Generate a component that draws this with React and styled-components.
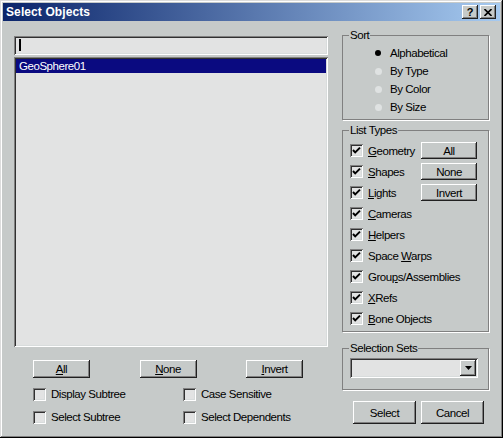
import styled, { createGlobalStyle } from 'styled-components';

const Face = '#c6cac9';
const Field = '#e2e3e3';

const GlobalStyle = createGlobalStyle`
 html, body {
  margin: 0;
  padding: 0;
  background: ${Face};
 }
 body {
  font-family: 'Liberation Sans', Arial, sans-serif;
  font-size: 11.5px;
  letter-spacing: -0.45px;
  color: #000;
 }
`;

/* classic 3d edges */
const raised = `
 box-shadow: inset -1px -1px #202020, inset 1px 1px #fff, inset -2px -2px #808080, inset 2px 2px ${Face};
`;
const sunken = `
 box-shadow: inset 1px 1px #808080, inset -1px -1px #fff, inset 2px 2px #303030, inset -2px -2px #d8dcdc;
`;

const Window = styled.div`
 width: 503px;
 height: 438px;
 box-sizing: border-box;
 padding: 3px;
 background: ${Face};
 box-shadow: inset -1px -1px #000, inset 1px 1px #dcdcdc, inset -2px -2px #808080, inset 2px 2px #fff;
 display: flex;
 flex-direction: column;
`;

const TitleBar = styled.div`
 height: 18px;
 display: flex;
 align-items: center;
 padding: 0 4px 0 3px;
 background: linear-gradient(to right, #0a246a, #a6caf0);
`;

const Title = styled.span`
 flex: 1;
 color: #fff;
 font-weight: 700;
 font-size: 12px;
 letter-spacing: 0.1px;
`;

const TitleButton = styled.button`
 width: 16px;
 height: 14px;
 margin-left: ${({ $gap }) => $gap || 0}px;
 padding: 0;
 border: 0;
 background: ${Face};
 ${raised}
 display: flex;
 align-items: center;
 justify-content: center;
 font-family: 'Liberation Sans', Arial, sans-serif;
 font-weight: 700;
 font-size: 11px;
 line-height: 1;
 color: #000;
`;

const Body = styled.div`
 display: grid;
 grid-template-columns: 314px 147px;
 column-gap: 14px;
 padding: 8px 0 0 11px;
`;

const LeftColumn = styled.div`
 display: flex;
 flex-direction: column;
 padding-top: 7px;
`;

const SearchField = styled.div`
 height: 19px;
 box-sizing: border-box;
 padding: 3px 4px;
 background: ${Field};
 ${sunken}
`;

const Caret = styled.span`
 display: block;
 width: 2px;
 height: 12px;
 margin-left: 1px;
 background: #000;
`;

const ObjectList = styled.div`
 height: 290px;
 margin-top: 2px;
 box-sizing: border-box;
 padding: 2px;
 background: ${Field};
 ${sunken}
`;

const ListItem = styled.div`
 height: 14px;
 line-height: 14px;
 padding-left: 3px;
 background: ${({ $selected }) => ($selected ? '#0a0a80' : 'transparent')};
 color: ${({ $selected }) => ($selected ? '#fff' : '#000')};
`;

const ButtonRow = styled.div`
 display: flex;
 justify-content: space-between;
 margin-top: 13px;
 padding: 0 25px 0 19px;
`;

const Button = styled.button`
 width: ${({ $w }) => $w || 57}px;
 height: ${({ $h }) => $h || 18}px;
 padding: 0;
 border: 0;
 background: ${Face};
 ${raised}
 font: inherit;
 letter-spacing: inherit;
 color: #000;
`;

const Options = styled.div`
 display: grid;
 grid-template-columns: 150px auto;
 row-gap: 9px;
 margin-top: 9px;
 padding-left: 19px;
`;

const CheckRow = styled.label`
 display: flex;
 align-items: center;
 gap: 5px;
 height: ${({ $h }) => $h || 14}px;
`;

const Box = styled.span`
 width: 13px;
 height: 13px;
 flex: none;
 background: ${Field};
 ${sunken}
 display: flex;
 align-items: center;
 justify-content: center;
`;

const Key = styled.span`
 text-decoration: underline;
`;

const RightColumn = styled.div`
 display: flex;
 flex-direction: column;
`;

const Group = styled.fieldset`
 margin: ${({ $top }) => $top || 0}px 0 0;
 padding: 0;
 min-width: 0;
 border: 1px solid #808080;
 box-shadow: 1px 1px 0 #fff;
`;

const Legend = styled.legend`
 margin-left: 6px;
 padding: 0 1px;
 line-height: 12px;
`;

const GroupBody = styled.div`
 padding: ${({ $pad }) => $pad};
`;

const RadioRow = styled.div`
 display: flex;
 align-items: center;
 gap: 8px;
 height: 18px;
`;

const Dot = styled.span`
 width: 8px;
 height: 8px;
 flex: none;
 display: flex;
 align-items: center;
 justify-content: center;
 &::after {
  content: '';
  width: ${({ $on }) => ($on ? 6 : 7)}px;
  height: ${({ $on }) => ($on ? 6 : 7)}px;
  border-radius: 50%;
  background: ${({ $on }) => ($on ? '#000' : '#dfe2e2')};
 }
`;

const TypeRow = styled.div`
 display: flex;
 align-items: center;
 height: 21px;
`;

const TypeLabel = styled(CheckRow)`
 flex: 1;
`;

const Dropdown = styled.div`
 height: 20px;
 box-sizing: border-box;
 padding: 2px;
 display: flex;
 justify-content: flex-end;
 background: ${Field};
 ${sunken}
`;

const DropButton = styled.span`
 width: 16px;
 height: 16px;
 background: ${Face};
 ${raised}
 display: flex;
 align-items: center;
 justify-content: center;
`;

const DialogButtons = styled.div`
 display: flex;
 gap: 5px;
 margin-top: 11px;
 padding-left: 11px;
`;

const Check = ({ on }) => (
 <Box>
  {on && (
   <svg width='9' height='9' viewBox='0 0 9 9'>
    <path d='M1 4 L3.2 6.4 L8 1.6' fill='none' stroke='#000' strokeWidth='2' />
   </svg>
  )}
 </Box>
);

const listTypes = [
 { pre: '', key: 'G', post: 'eometry', button: 'All' },
 { pre: '', key: 'S', post: 'hapes', button: 'None' },
 { pre: '', key: 'L', post: 'ights', button: 'Invert' },
 { pre: '', key: 'C', post: 'ameras' },
 { pre: '', key: 'H', post: 'elpers' },
 { pre: 'Space ', key: 'W', post: 'arps' },
 { pre: 'Grou', key: 'p', post: 's/Assemblies' },
 { pre: '', key: 'X', post: 'Refs' },
 { pre: '', key: 'B', post: 'one Objects' },
];

const sorts = ['Alphabetical', 'By Type', 'By Color', 'By Size'];

const App = () => {
 return (
  <>
   <GlobalStyle />
   <Window>
    <TitleBar>
     <Title>Select Objects</Title>
     <TitleButton>?</TitleButton>
     <TitleButton $gap={2}>
      <svg width='8' height='7' viewBox='0 0 8 7'>
       <path d='M0.5 0 L7.5 7 M7.5 0 L0.5 7' stroke='#000' strokeWidth='1.6' />
      </svg>
     </TitleButton>
    </TitleBar>
    <Body>
     <LeftColumn>
      <SearchField>
       <Caret />
      </SearchField>
      <ObjectList>
       <ListItem $selected>GeoSphere01</ListItem>
      </ObjectList>
      <ButtonRow>
       <Button>
        <Key>A</Key>ll
       </Button>
       <Button>
        <Key>N</Key>one
       </Button>
       <Button>
        <Key>I</Key>nvert
       </Button>
      </ButtonRow>
      <Options>
       <CheckRow>
        <Check />
        Display Subtree
       </CheckRow>
       <CheckRow>
        <Check />
        Case Sensitive
       </CheckRow>
       <CheckRow>
        <Check />
        Select Subtree
       </CheckRow>
       <CheckRow>
        <Check />
        Select Dependents
       </CheckRow>
      </Options>
     </LeftColumn>
     <RightColumn>
      <Group>
       <Legend>Sort</Legend>
       <GroupBody $pad='3px 0 3px 31px'>
        {sorts.map((s, i) => (
         <RadioRow key={s}>
          <Dot $on={i === 0} />
          {s}
         </RadioRow>
        ))}
       </GroupBody>
      </Group>
      <Group $top={4}>
       <Legend>List Types</Legend>
       <GroupBody $pad='4px 11px 2px 7px'>
        {listTypes.map((t) => (
         <TypeRow key={t.key}>
          <TypeLabel>
           <Check on />
           <span>
            {t.pre}
            <Key>{t.key}</Key>
            {t.post}
           </span>
          </TypeLabel>
          {t.button && (
           <Button $w={56} $h={17}>
            {t.button}
           </Button>
          )}
         </TypeRow>
        ))}
       </GroupBody>
      </Group>
      <Group $top={10}>
       <Legend>Selection Sets</Legend>
       <GroupBody $pad='4px 10px 11px 7px'>
        <Dropdown>
         <DropButton>
          <svg width='7' height='4' viewBox='0 0 7 4'>
           <path d='M0 0 H7 L3.5 4 Z' fill='#000' />
          </svg>
         </DropButton>
        </Dropdown>
       </GroupBody>
      </Group>
      <DialogButtons>
       <Button $w={63} $h={23}>
        Select
       </Button>
       <Button $w={63} $h={23}>
        Cancel
       </Button>
      </DialogButtons>
     </RightColumn>
    </Body>
   </Window>
  </>
 );
};

export default App;
